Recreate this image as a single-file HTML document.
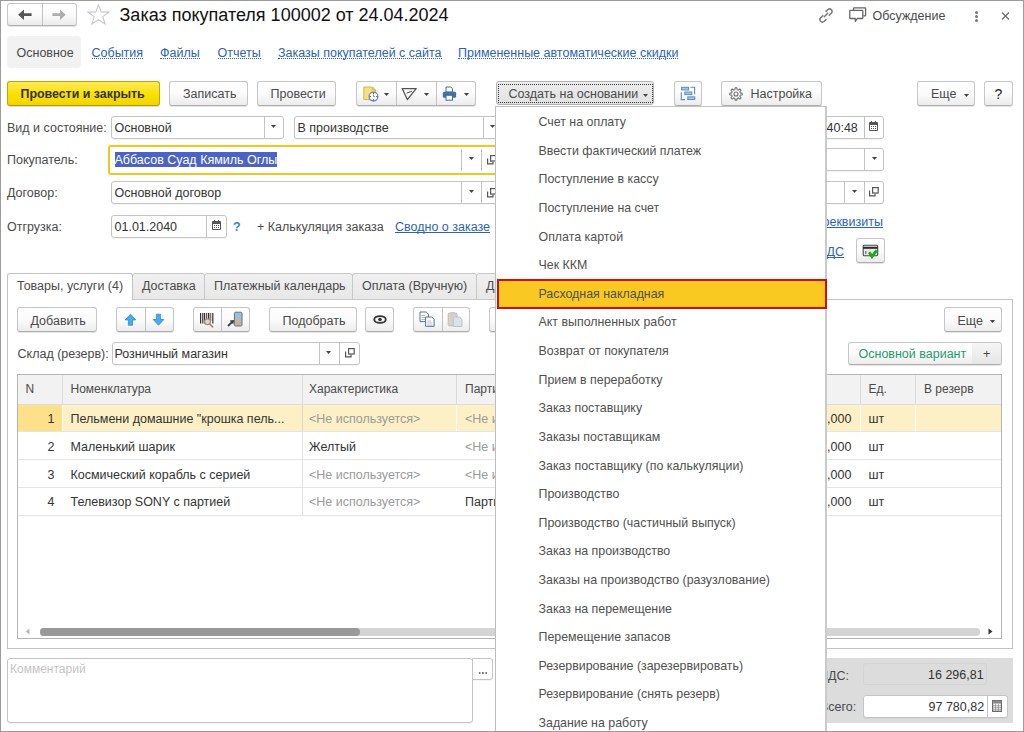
<!DOCTYPE html>
<html><head><meta charset="utf-8">
<style>
*{box-sizing:border-box;margin:0;padding:0}
html,body{width:1024px;height:732px;overflow:hidden;background:#fff}
body{position:relative;font-family:"Liberation Sans",sans-serif;font-size:12.5px;color:#4a4a4a}
.a{position:absolute}
.t{position:absolute;white-space:nowrap;line-height:1}
.btn{position:absolute;border:1px solid #c6c6c6;border-bottom-color:#aeaeae;border-radius:3px;background:linear-gradient(#ffffff 0%,#fbfbfb 50%,#ececec 100%);box-shadow:0 1px 0 rgba(0,0,0,.10)}
.fld{position:absolute;border:1px solid #c4c4c4;border-radius:3px;background:#fff;box-shadow:0 1px 0 rgba(0,0,0,.04)}
.sep{position:absolute;top:0;bottom:0;width:1px;background:#c2c2c2}
.dot{display:inline-block;height:12px;border-bottom:1px dotted #2c62b8}
.und{display:inline-block;height:12px;border-bottom:1px solid #2c62b8}
</style></head><body>
<div class="a" style="left:0px;top:0px;width:1024px;height:732px;border:1px solid #9c9c9c"></div>
<div class="btn" style="left:7px;top:3px;width:70px;height:23px;"><div class="sep" style="left:34px"></div></div>
<svg class="a" style="left:17px;top:9px" width="16" height="12" viewBox="0 0 16 12"><path d="M1.1 5.7 L7 0.4 V4.3 H14.6 V7.1 H7 V11 Z" fill="#555"/></svg>
<svg class="a" style="left:52px;top:9px" width="15" height="12" viewBox="0 0 15 12"><path d="M13.7 5.7 L8 0.4 V4.3 H0.4 V7.1 H8 V11 Z" fill="#adadad"/></svg>
<svg class="a" style="left:87px;top:4px" width="23" height="21" viewBox="0 0 23 21"><path d="M11.5 1 L14.2 7.9 L21.8 8.1 L15.8 12.6 L18.1 20 L11.5 15.7 L4.9 20 L7.2 12.6 L1.2 8.1 L8.8 7.9 Z" fill="none" stroke="#c2c7cc" stroke-width="1.1"/></svg>
<div class="t" style="left:119.5px;top:6.00px;font-size:18px;color:#111">Заказ покупателя 100002 от 24.04.2024</div>
<svg class="a" style="left:818px;top:8px" width="16" height="15" viewBox="0 0 16 15"><g fill="none" stroke="#777" stroke-width="1.5" stroke-linecap="round"><path d="M6.3 8.7 L9.7 5.3"/><path d="M8 3.4 L10 1.5 Q11.7 0.2 13.4 1.7 Q14.8 3.4 13.5 5.1 L11.2 7.3"/><path d="M8 11.6 L6 13.5 Q4.3 14.8 2.6 13.3 Q1.2 11.6 2.5 9.9 L4.8 7.7"/></g></svg>
<svg class="a" style="left:849px;top:7px" width="18" height="16" viewBox="0 0 18 16"><g fill="none" stroke="#666" stroke-width="1.3" stroke-linejoin="round"><path d="M4.5 3.2 V1.5 Q4.5 0.9 5.1 0.9 H16 Q16.6 0.9 16.6 1.5 V8.3 Q16.6 8.9 16 8.9 H14.3"/><path d="M1.4 3.4 H13.1 Q13.8 3.4 13.8 4 V10.9 Q13.8 11.5 13.1 11.5 H8.2 L6.4 14.4 L6.2 11.5 H1.4 Q0.8 11.5 0.8 10.9 V4 Q0.8 3.4 1.4 3.4 Z" fill="#fff"/></g></svg>
<div class="t" style="left:872.5px;top:10.00px">Обсуждение</div>
<div class="a" style="left:975px;top:11px;width:3.4px;height:3.4px;border-radius:50%;background:#777"></div>
<div class="a" style="left:975px;top:14.9px;width:3.4px;height:3.4px;border-radius:50%;background:#777"></div>
<div class="a" style="left:975px;top:18.8px;width:3.4px;height:3.4px;border-radius:50%;background:#777"></div>
<svg class="a" style="left:1001px;top:12px" width="9" height="8" viewBox="0 0 9 8"><path d="M1 0.5 L8 7.5 M8 0.5 L1 7.5" stroke="#666" stroke-width="1.1"/></svg>
<div class="a" style="left:7px;top:36px;width:74px;height:32px;background:#f2f2f2;border-radius:4px"></div>
<div class="t" style="left:16.5px;top:47.00px">Основное</div>
<div class="t" style="left:91.5px;top:47.00px;color:#2c62b8"><span class="dot">События</span></div>
<div class="t" style="left:160px;top:47.00px;color:#2c62b8"><span class="dot">Файлы</span></div>
<div class="t" style="left:217.5px;top:47.00px;color:#2c62b8"><span class="dot">Отчеты</span></div>
<div class="t" style="left:278px;top:47.00px;color:#2c62b8"><span class="dot">Заказы покупателей с сайта</span></div>
<div class="t" style="left:458px;top:47.00px;color:#2c62b8"><span class="dot">Примененные автоматические скидки</span></div>
<div class="a" style="left:7px;top:81px;width:153px;height:25px;border:1px solid #c7a500;border-bottom-color:#b89800;border-radius:3px;background:linear-gradient(#fdea5a,#fae000 55%,#f2d400);box-shadow:0 1px 0 rgba(0,0,0,.12)"></div>
<div class="t" style="left:20.5px;top:88.00px;color:#333;font-weight:bold;font-size:12.4px">Провести и закрыть</div>
<div class="btn" style="left:169px;top:81px;width:79px;height:25px;"></div>
<div class="t" style="left:183px;top:88.00px">Записать</div>
<div class="btn" style="left:257px;top:81px;width:79px;height:25px;"></div>
<div class="t" style="left:270.5px;top:88.00px">Провести</div>
<div class="btn" style="left:356px;top:81px;width:120px;height:25px;"><div class="sep" style="left:39px"></div><div class="sep" style="left:79px"></div></div>
<svg class="a" style="left:363px;top:86px" width="16" height="16" viewBox="0 0 16 16">
<path d="M0.8 1 H9.5 L12.5 4 V13.5 H0.8 Z" fill="#f6df82" stroke="#d8b84c" stroke-width="1"/>
<path d="M9.5 1 V4 H12.5" fill="none" stroke="#d8b84c" stroke-width="1"/>
<circle cx="10.5" cy="10.6" r="4.4" fill="#fff" stroke="#5a8cc6" stroke-width="1.3"/>
<rect x="10" y="6.6" width="1.1" height="1.4" fill="#e03030"/><rect x="10" y="13.2" width="1.1" height="1.4" fill="#e03030"/>
<rect x="6.6" y="10" width="1.4" height="1.1" fill="#e03030"/><rect x="13.1" y="10" width="1.4" height="1.1" fill="#e03030"/>
<path d="M10.5 8.5 V10.6 H12" fill="none" stroke="#5a8cc6" stroke-width="0.9"/>
</svg>
<svg class="a" style="left:384.00px;top:93.30px" width="5" height="3" viewBox="0 0 5 3"><path d="M0 0 H5 L2.5 3 Z" fill="#444"/></svg>
<svg class="a" style="left:401px;top:87px" width="17" height="14" viewBox="0 0 17 14"><path d="M1.2 1.6 H15.2 L6.3 12.6 Z" fill="none" stroke="#555" stroke-width="1.3" stroke-linejoin="round"/><path d="M5.6 6.2 L11 4.2" stroke="#555" stroke-width="1"/></svg>
<svg class="a" style="left:424.20px;top:93.30px" width="5" height="3" viewBox="0 0 5 3"><path d="M0 0 H5 L2.5 3 Z" fill="#444"/></svg>
<svg class="a" style="left:442px;top:86px" width="15" height="15" viewBox="0 0 15 15">
<path d="M4 1 H8.8 L10.5 2.7 V6 H4 Z" fill="#fff" stroke="#3f6fa6" stroke-width="1"/>
<rect x="0.8" y="5.8" width="13.3" height="6" rx="1.5" fill="#3f6fa6"/>
<rect x="4" y="9.3" width="6.5" height="4.9" fill="#fff" stroke="#3f6fa6" stroke-width="1"/>
</svg>
<svg class="a" style="left:464.40px;top:93.30px" width="5" height="3" viewBox="0 0 5 3"><path d="M0 0 H5 L2.5 3 Z" fill="#444"/></svg>
<div class="a" style="left:496px;top:81px;width:158px;height:24px;border:1px solid #b4b4b4;border-radius:3px;background:linear-gradient(#ececec,#e2e2e2)"></div>
<div class="a" style="left:498px;top:84px;width:155px;height:19px;border:1px dotted #333"></div>
<div class="t" style="left:508.5px;top:88.00px">Создать на основании</div>
<svg class="a" style="left:642.80px;top:93.50px" width="5" height="3" viewBox="0 0 5 3"><path d="M0 0 H5 L2.5 3 Z" fill="#444"/></svg>
<div class="btn" style="left:674px;top:81px;width:28px;height:25px;"></div>
<svg class="a" style="left:680px;top:86px" width="16" height="15" viewBox="0 0 16 15">
<g stroke="#5b8dbf" stroke-width="1" fill="#a9c8e6">
<rect x="1.5" y="1.3" width="7" height="2.6"/><rect x="4.8" y="6" width="7" height="2.6"/><rect x="7.8" y="10.9" width="7" height="2.6"/>
</g>
<path d="M10.5 1.3 H14.6 V8.3 M1.3 6.2 V13.6 H5" fill="none" stroke="#5b8dbf" stroke-width="1.1"/>
</svg>
<div class="btn" style="left:721px;top:81px;width:101px;height:25px;"></div>
<svg class="a" style="left:728px;top:85.5px" width="16" height="16" viewBox="0 0 16 16">
<path d="M14.30 8.00 L14.29 8.41 L14.15 8.81 L13.25 9.04 L12.34 9.16 L12.17 9.41 L12.07 9.68 L11.95 9.95 L11.89 10.25 L12.45 10.97 L12.92 11.78 L12.74 12.15 L12.45 12.45 L12.15 12.74 L11.78 12.92 L10.97 12.45 L10.25 11.89 L9.95 11.95 L9.68 12.07 L9.41 12.17 L9.16 12.34 L9.04 13.25 L8.81 14.15 L8.41 14.29 L8.00 14.30 L7.59 14.29 L7.19 14.15 L6.96 13.25 L6.84 12.34 L6.59 12.17 L6.32 12.07 L6.05 11.95 L5.75 11.89 L5.03 12.45 L4.22 12.92 L3.85 12.74 L3.55 12.45 L3.26 12.15 L3.08 11.78 L3.55 10.97 L4.11 10.25 L4.05 9.95 L3.93 9.68 L3.83 9.41 L3.66 9.16 L2.75 9.04 L1.85 8.81 L1.71 8.41 L1.70 8.00 L1.71 7.59 L1.85 7.19 L2.75 6.96 L3.66 6.84 L3.83 6.59 L3.93 6.32 L4.05 6.05 L4.11 5.75 L3.55 5.03 L3.08 4.22 L3.26 3.85 L3.55 3.55 L3.85 3.26 L4.22 3.08 L5.03 3.55 L5.75 4.11 L6.05 4.05 L6.32 3.93 L6.59 3.83 L6.84 3.66 L6.96 2.75 L7.19 1.85 L7.59 1.71 L8.00 1.70 L8.41 1.71 L8.81 1.85 L9.04 2.75 L9.16 3.66 L9.41 3.83 L9.68 3.93 L9.95 4.05 L10.25 4.11 L10.97 3.55 L11.78 3.08 L12.15 3.26 L12.45 3.55 L12.74 3.85 L12.92 4.22 L12.45 5.03 L11.89 5.75 L11.95 6.05 L12.07 6.32 L12.17 6.59 L12.34 6.84 L13.25 6.96 L14.15 7.19 L14.29 7.59 Z" fill="none" stroke="#707070" stroke-width="1.1" stroke-linejoin="round"/>
<circle cx="8" cy="8" r="2" fill="none" stroke="#707070" stroke-width="1.1"/>
</svg>
<div class="t" style="left:750.5px;top:88.00px">Настройка</div>
<div class="btn" style="left:917px;top:81px;width:58px;height:25px;"></div>
<div class="t" style="left:931px;top:88.00px">Еще</div>
<svg class="a" style="left:963.50px;top:93.50px" width="5" height="3" viewBox="0 0 5 3"><path d="M0 0 H5 L2.5 3 Z" fill="#444"/></svg>
<div class="btn" style="left:984px;top:81px;width:29px;height:25px;"></div>
<div class="t" style="left:994.5px;top:87.00px;font-size:14px;color:#222">?</div>
<div class="t" style="left:7px;top:122.00px">Вид и состояние:</div>
<div class="fld" style="left:111px;top:116px;width:173px;height:23px;"><div class="sep" style="left:152px"></div></div>
<svg class="a" style="left:271.00px;top:125.20px" width="5" height="3" viewBox="0 0 5 3"><path d="M0 0 H5 L2.5 3 Z" fill="#444"/></svg>
<div class="t" style="left:114.5px;top:122.00px;color:#333">Основной</div>
<div class="fld" style="left:294px;top:116px;width:215px;height:23px;"><div class="sep" style="left:188px"></div></div>
<svg class="a" style="left:489.50px;top:125.20px" width="5" height="3" viewBox="0 0 5 3"><path d="M0 0 H5 L2.5 3 Z" fill="#444"/></svg>
<div class="t" style="left:297.5px;top:122.00px;color:#333">В производстве</div>
<div class="t" style="left:7px;top:154.00px">Покупатель:</div>
<div class="a" style="left:108px;top:145px;width:400px;height:29.5px;border:2px solid #f6c51e;border-radius:3px;background:#fff"></div>
<div class="a" style="left:461px;top:149px;width:1px;height:22px;background:#c2c2c2"></div>
<div class="a" style="left:481px;top:149px;width:1px;height:22px;background:#c2c2c2"></div>
<svg class="a" style="left:469.00px;top:157.20px" width="5" height="3" viewBox="0 0 5 3"><path d="M0 0 H5 L2.5 3 Z" fill="#444"/></svg>
<svg class="a" style="left:487px;top:154.5px" width="10" height="10" viewBox="0 0 10 10"><rect x="3.6" y="0.6" width="5.6" height="5.4" fill="none" stroke="#555" stroke-width="1.2"/><path d="M0.6 3.4 V8.8 H6 V6.6" fill="none" stroke="#555" stroke-width="1.2"/></svg>
<div class="a" style="left:114.5px;top:152px;width:162.5px;height:14.7px;background:#4b64c4"></div>
<div class="t" style="left:114.5px;top:154.00px;color:#fff">Аббасов Суад Кямиль Оглы</div>
<div class="t" style="left:7px;top:187.00px">Договор:</div>
<div class="fld" style="left:111px;top:181px;width:400px;height:23px;"><div class="sep" style="left:349px"></div><div class="sep" style="left:369px"></div></div>
<svg class="a" style="left:468.50px;top:190.20px" width="5" height="3" viewBox="0 0 5 3"><path d="M0 0 H5 L2.5 3 Z" fill="#444"/></svg>
<svg class="a" style="left:487px;top:187.5px" width="10" height="10" viewBox="0 0 10 10"><rect x="3.6" y="0.6" width="5.6" height="5.4" fill="none" stroke="#555" stroke-width="1.2"/><path d="M0.6 3.4 V8.8 H6 V6.6" fill="none" stroke="#555" stroke-width="1.2"/></svg>
<div class="t" style="left:114.5px;top:187.00px;color:#333">Основной договор</div>
<div class="t" style="left:7px;top:221.00px">Отгрузка:</div>
<div class="fld" style="left:111px;top:215px;width:116px;height:23px;"><div class="sep" style="left:94px"></div></div>
<svg class="a" style="left:212px;top:220px" width="9" height="10" viewBox="0 0 9 10"><rect x="0" y="1" width="9" height="9" rx="1" fill="#555"/><rect x="1" y="4" width="7" height="5" fill="#fff"/><rect x="2" y="0" width="1" height="2" fill="#555"/><rect x="6" y="0" width="1" height="2" fill="#555"/><path d="M2 5.5 H3 M4 5.5 H5 M6 5.5 H7 M2 7.5 H3 M4 7.5 H5 M6 7.5 H7" stroke="#555" stroke-width="1"/></svg>
<div class="t" style="left:114.5px;top:221.00px;color:#333">01.01.2040</div>
<div class="t" style="left:233px;top:221.00px;color:#2f86c8;font-weight:bold">?</div>
<div class="t" style="left:257px;top:221.00px">+ Калькуляция заказа</div>
<div class="t" style="left:395px;top:221.00px;color:#2c62b8"><span class="und">Сводно о заказе</span></div>
<div class="fld" style="left:760px;top:116px;width:124px;height:23px;"><div class="sep" style="left:103px"></div></div>
<svg class="a" style="left:869px;top:121px" width="9" height="10" viewBox="0 0 9 10"><rect x="0" y="1" width="9" height="9" rx="1" fill="#555"/><rect x="1" y="4" width="7" height="5" fill="#fff"/><rect x="2" y="0" width="1" height="2" fill="#555"/><rect x="6" y="0" width="1" height="2" fill="#555"/><path d="M2 5.5 H3 M4 5.5 H5 M6 5.5 H7 M2 7.5 H3 M4 7.5 H5 M6 7.5 H7" stroke="#555" stroke-width="1"/></svg>
<div class="t" style="left:826.5px;top:122.00px;color:#333">40:48</div>
<div class="fld" style="left:760px;top:148px;width:124px;height:23px;"><div class="sep" style="left:103px"></div></div>
<svg class="a" style="left:871.50px;top:157.20px" width="5" height="3" viewBox="0 0 5 3"><path d="M0 0 H5 L2.5 3 Z" fill="#444"/></svg>
<div class="fld" style="left:760px;top:181px;width:124px;height:23px;"><div class="sep" style="left:83px"></div><div class="sep" style="left:103px"></div></div>
<svg class="a" style="left:851.50px;top:190.20px" width="5" height="3" viewBox="0 0 5 3"><path d="M0 0 H5 L2.5 3 Z" fill="#444"/></svg>
<svg class="a" style="left:869px;top:187px" width="10" height="10" viewBox="0 0 10 10"><rect x="3.6" y="0.6" width="5.6" height="5.4" fill="none" stroke="#555" stroke-width="1.2"/><path d="M0.6 3.4 V8.8 H6 V6.6" fill="none" stroke="#555" stroke-width="1.2"/></svg>
<div class="t" style="left:822.5px;top:216.00px;color:#2c62b8"><span class="und">реквизиты</span></div>
<div class="t" style="left:826.5px;top:246.00px;color:#2c62b8"><span class="und">ДС</span></div>
<div class="btn" style="left:856px;top:238px;width:29px;height:25px;"></div>
<svg class="a" style="left:862px;top:244px" width="17" height="15" viewBox="0 0 17 15">
<rect x="1.2" y="1.2" width="14.5" height="10.5" rx="1.2" fill="#e8e8e8" stroke="#4a4a4a" stroke-width="1.1"/>
<rect x="1.2" y="2.8" width="14.5" height="2" fill="#2a2a2a"/>
<rect x="3" y="7" width="1.5" height="3" fill="#888"/>
<path d="M7.2 8.3 L10 12.6 L14.8 6.3" fill="none" stroke="#12b012" stroke-width="2.8" stroke-linejoin="miter"/>
</svg>
<div class="a" style="left:7px;top:299px;width:1006px;height:350px;border:1px solid #c2c2c2"></div>
<div class="a" style="left:132px;top:273px;width:73px;height:27px;background:linear-gradient(#f0f0f0,#e8e8e8);border:1px solid #c8c8c8;border-radius:3px 3px 0 0"></div>
<div class="a" style="left:204px;top:273px;width:149px;height:27px;background:linear-gradient(#f0f0f0,#e8e8e8);border:1px solid #c8c8c8;border-radius:3px 3px 0 0"></div>
<div class="a" style="left:352px;top:273px;width:125px;height:27px;background:linear-gradient(#f0f0f0,#e8e8e8);border:1px solid #c8c8c8;border-radius:3px 3px 0 0"></div>
<div class="a" style="left:476px;top:273px;width:40px;height:27px;background:linear-gradient(#f0f0f0,#e8e8e8);border:1px solid #c8c8c8;border-radius:3px 3px 0 0"></div>
<div class="a" style="left:7px;top:273px;width:126px;height:27px;background:#fff;border:1px solid #c2c2c2;border-bottom:none;border-radius:3px 3px 0 0"></div>
<div class="t" style="left:17px;top:280.00px">Товары, услуги (4)</div>
<div class="t" style="left:142px;top:280.00px">Доставка</div>
<div class="t" style="left:214px;top:280.00px">Платежный календарь</div>
<div class="t" style="left:362px;top:280.00px">Оплата (Вручную)</div>
<div class="t" style="left:486px;top:280.00px">Д</div>
<div class="btn" style="left:17px;top:307px;width:80px;height:25px;"></div>
<div class="t" style="left:30.5px;top:315.00px">Добавить</div>
<div class="btn" style="left:116px;top:307px;width:58px;height:25px;"><div class="sep" style="left:28px"></div></div>
<svg class="a" style="left:124px;top:313px" width="13" height="13" viewBox="0 0 13 13"><path d="M6.5 1.2 L11.8 6.9 H8.6 V12.2 H4.4 V6.9 H1.2 Z" fill="#45aeea" stroke="#2a8ccf" stroke-width="0.8" stroke-linejoin="round"/></svg>
<svg class="a" style="left:152px;top:313px" width="13" height="13" viewBox="0 0 13 13"><path d="M6.5 12.2 L11.8 6.5 H8.6 V1.2 H4.4 V6.5 H1.2 Z" fill="#45aeea" stroke="#2a8ccf" stroke-width="0.8" stroke-linejoin="round"/></svg>
<div class="btn" style="left:193px;top:307px;width:57px;height:25px;"><div class="sep" style="left:27px"></div></div>
<svg class="a" style="left:199px;top:312px" width="16" height="16" viewBox="0 0 16 16">
<g fill="#333"><rect x="1" y="1" width="1.2" height="10.5"/><rect x="3" y="1" width="0.8" height="10.5"/><rect x="4.6" y="1" width="1.6" height="10.5"/><rect x="7.2" y="1" width="0.8" height="7"/><rect x="8.8" y="1" width="1.6" height="7"/><rect x="11.4" y="1" width="0.8" height="8"/><rect x="13.2" y="1" width="1.2" height="10.5"/></g>
<circle cx="8.5" cy="9.8" r="2.9" fill="#c9dcf3" stroke="#b98a5e" stroke-width="1.2"/>
<path d="M10.6 11.9 L13.5 14.8" stroke="#b98a5e" stroke-width="1.8" stroke-linecap="round"/>
</svg>
<svg class="a" style="left:227px;top:311px" width="16" height="16" viewBox="0 0 16 16">
<rect x="7.4" y="1.2" width="7.6" height="13.8" rx="1.2" fill="#b5b5b5" stroke="#707070" stroke-width="1"/>
<rect x="8.6" y="2.4" width="5.2" height="5" fill="#8fc3ee"/>
<rect x="9.4" y="8.4" width="3.6" height="1.4" fill="#e8c020"/>
<path d="M1 15 L5.2 10.8" stroke="#3a3a3a" stroke-width="1.8"/><path d="M7 9 L2.6 9.6 L6.4 13.4 Z" fill="#3a3a3a"/>
</svg>
<div class="btn" style="left:269px;top:307px;width:88px;height:25px;"></div>
<div class="t" style="left:282.5px;top:315.00px">Подобрать</div>
<div class="btn" style="left:365px;top:307px;width:29px;height:25px;"></div>
<svg class="a" style="left:373px;top:315px" width="14" height="9" viewBox="0 0 14 9"><ellipse cx="7" cy="4.5" rx="5.8" ry="3.4" fill="none" stroke="#333" stroke-width="1.8"/><circle cx="7" cy="4.5" r="1.8" fill="#333"/></svg>
<div class="btn" style="left:413px;top:307px;width:57px;height:25px;"><div class="sep" style="left:28px"></div></div>
<svg class="a" style="left:419px;top:311px" width="17" height="17" viewBox="0 0 17 17">
<path d="M1 1 H7.2 L9.5 3.3 V10.6 H1 Z" fill="#fff" stroke="#58708e" stroke-width="1"/>
<path d="M2.5 4.5 H6 M2.5 6.5 H7.5 M2.5 8.5 H7.5" stroke="#a0b0c4" stroke-width="0.8"/>
<path d="M6.6 6 H12.8 L15.1 8.3 V15.3 H6.6 Z" fill="#fff" stroke="#58708e" stroke-width="1"/>
<path d="M8.2 10 H12 M8.2 12 H13.5 M8.2 14 H13.5" stroke="#a0b0c4" stroke-width="0.8"/>
</svg>
<svg class="a" style="left:447px;top:311px" width="17" height="17" viewBox="0 0 17 17">
<rect x="1.2" y="2.2" width="8.8" height="12.6" rx="1" fill="#d8d2cc" stroke="#c4b8ae" stroke-width="1"/>
<rect x="3.6" y="1" width="4" height="2.4" fill="#c8c8c8"/>
<path d="M6.2 6 H12.6 L15 8.4 V15.4 H6.2 Z" fill="#dde2e8" stroke="#b8c0ca" stroke-width="1"/>
</svg>
<div class="btn" style="left:489px;top:307px;width:40px;height:25px;"></div>
<div class="btn" style="left:944px;top:307px;width:58px;height:25px;"></div>
<div class="t" style="left:957.5px;top:315.00px">Еще</div>
<svg class="a" style="left:990.00px;top:319.50px" width="5" height="3" viewBox="0 0 5 3"><path d="M0 0 H5 L2.5 3 Z" fill="#444"/></svg>
<div class="t" style="left:17.5px;top:348.00px">Склад (резерв):</div>
<div class="fld" style="left:112px;top:342px;width:248px;height:23px;"><div class="sep" style="left:206px"></div><div class="sep" style="left:226px"></div></div>
<svg class="a" style="left:326.10px;top:351.20px" width="5" height="3" viewBox="0 0 5 3"><path d="M0 0 H5 L2.5 3 Z" fill="#444"/></svg>
<svg class="a" style="left:345px;top:348px" width="10" height="10" viewBox="0 0 10 10"><rect x="3.6" y="0.6" width="5.6" height="5.4" fill="none" stroke="#555" stroke-width="1.2"/><path d="M0.6 3.4 V8.8 H6 V6.6" fill="none" stroke="#555" stroke-width="1.2"/></svg>
<div class="t" style="left:114.5px;top:348.00px;color:#333">Розничный магазин</div>
<div class="btn" style="left:848px;top:342px;width:154px;height:23px;"><div class="sep" style="left:123px"></div></div>
<div class="a" style="left:972px;top:343px;width:29px;height:21px;background:linear-gradient(#f6f6f6,#e6e6e6);border-radius:0 2px 2px 0"></div>
<div class="t" style="left:858.5px;top:348.00px;color:#1f9b6e">Основной вариант</div>
<div class="t" style="left:983px;top:348.00px;color:#444">+</div>
<div class="a" style="left:17px;top:374px;width:985px;height:265px;border:1px solid #b4b4b4;background:#fff"></div>
<div class="a" style="left:18px;top:375px;width:983px;height:30px;background:#f2f2f2;border-bottom:1px solid #dcdcdc"></div>
<div class="a" style="left:18px;top:405px;width:983px;height:26px;background:#fdf0c6"></div>
<div class="a" style="left:18px;top:405px;width:44px;height:26px;background:#fde18a"></div>
<div class="a" style="left:18px;top:431px;width:983px;height:1px;background:#e4e4e4"></div>
<div class="a" style="left:18px;top:459px;width:983px;height:1px;background:#e4e4e4"></div>
<div class="a" style="left:18px;top:487px;width:983px;height:1px;background:#e4e4e4"></div>
<div class="a" style="left:18px;top:515px;width:983px;height:1px;background:#e4e4e4"></div>
<div class="a" style="left:62px;top:375px;width:1px;height:29px;background:#dadada"></div>
<div class="a" style="left:62px;top:405px;width:1px;height:26px;background:#fff"></div>
<div class="a" style="left:302px;top:375px;width:1px;height:29px;background:#dadada"></div>
<div class="a" style="left:302px;top:405px;width:1px;height:26px;background:#ded8c0"></div>
<div class="a" style="left:456px;top:375px;width:1px;height:29px;background:#dadada"></div>
<div class="a" style="left:456px;top:405px;width:1px;height:26px;background:#fff"></div>
<div class="a" style="left:860px;top:375px;width:1px;height:29px;background:#dadada"></div>
<div class="a" style="left:860px;top:405px;width:1px;height:26px;background:#fff"></div>
<div class="a" style="left:915px;top:375px;width:1px;height:29px;background:#dadada"></div>
<div class="a" style="left:915px;top:405px;width:1px;height:26px;background:#fff"></div>
<div class="a" style="left:302px;top:432px;width:1px;height:83px;background:#e0e0e0"></div>
<div class="t" style="left:25.5px;top:383.00px;font-size:12px">N</div>
<div class="t" style="left:70.5px;top:383.00px;font-size:12px">Номенклатура</div>
<div class="t" style="left:309px;top:383.00px;font-size:12px">Характеристика</div>
<div class="t" style="left:465px;top:383.00px;font-size:12px">Партия</div>
<div class="t" style="left:868.5px;top:383.00px;font-size:12px">Ед.</div>
<div class="t" style="left:924px;top:383.00px;font-size:12px">В резерв</div>
<div class="t" style="left:47.5px;top:413.00px;color:#333">1</div>
<div class="t" style="left:70.5px;top:413.00px;color:#333">Пельмени домашние "крошка пель...</div>
<div class="t" style="left:309px;top:413.00px;color:#9a9a9a">&lt;Не используется&gt;</div>
<div class="t" style="left:465px;top:413.00px;color:#9a9a9a">&lt;Не используется&gt;</div>
<div class="t" style="left:827px;top:413.00px;color:#333">,000</div>
<div class="t" style="left:868.5px;top:413.00px;color:#333">шт</div>
<div class="t" style="left:47.5px;top:441.00px;color:#333">2</div>
<div class="t" style="left:70.5px;top:441.00px;color:#333">Маленький шарик</div>
<div class="t" style="left:309px;top:441.00px;color:#333">Желтый</div>
<div class="t" style="left:465px;top:441.00px;color:#9a9a9a">&lt;Не используется&gt;</div>
<div class="t" style="left:827px;top:441.00px;color:#333">,000</div>
<div class="t" style="left:868.5px;top:441.00px;color:#333">шт</div>
<div class="t" style="left:47.5px;top:469.00px;color:#333">3</div>
<div class="t" style="left:70.5px;top:469.00px;color:#333">Космический корабль с серией</div>
<div class="t" style="left:309px;top:469.00px;color:#9a9a9a">&lt;Не используется&gt;</div>
<div class="t" style="left:465px;top:469.00px;color:#9a9a9a">&lt;Не используется&gt;</div>
<div class="t" style="left:827px;top:469.00px;color:#333">,000</div>
<div class="t" style="left:868.5px;top:469.00px;color:#333">шт</div>
<div class="t" style="left:47.5px;top:496.00px;color:#333">4</div>
<div class="t" style="left:70.5px;top:496.00px;color:#333">Телевизор SONY с партией</div>
<div class="t" style="left:309px;top:496.00px;color:#9a9a9a">&lt;Не используется&gt;</div>
<div class="t" style="left:465px;top:496.00px;color:#333">Партия</div>
<div class="t" style="left:827px;top:496.00px;color:#333">,000</div>
<div class="t" style="left:868.5px;top:496.00px;color:#333">шт</div>
<div class="a" style="left:40px;top:628px;width:940px;height:7.5px;background:#d4d4d4;border-radius:4px"></div>
<div class="a" style="left:40px;top:628px;width:320px;height:7.5px;background:#999;border-radius:4px"></div>
<svg class="a" style="left:25px;top:628px" width="5" height="7" viewBox="0 0 5 7"><path d="M4.5 0.5 V6.5 L0.5 3.5 Z" fill="#bbb"/></svg>
<svg class="a" style="left:988px;top:628px" width="5" height="7" viewBox="0 0 5 7"><path d="M0.5 0.5 V6.5 L4.5 3.5 Z" fill="#333"/></svg>
<div class="fld" style="left:7px;top:658px;width:466px;height:65px;"></div>
<div class="t" style="left:10px;top:663.00px;font-size:12px;color:#c6c3c3">Комментарий</div>
<div class="fld" style="left:472px;top:658px;width:21px;height:22px;border-radius:0 3px 3px 0"></div>
<div class="a" style="left:478px;top:672px;width:10px;height:2px;background:radial-gradient(circle,#555 0.6px,transparent 0.9px) 0 0/3.3px 2px repeat-x"></div>
<div class="a" style="left:500px;top:658px;width:513px;height:65px;background:#dcdcdc"></div>
<div class="t" style="left:819px;top:670.00px">НДС:</div>
<div class="a" style="left:863px;top:662.5px;width:124px;height:22.5px;background:#dcdcdc;border:1px solid #d3d3d3;border-radius:3px"></div>
<div class="t" style="left:928px;top:669.00px;color:#333">16 296,81</div>
<div class="t" style="left:820px;top:701.00px">Всего:</div>
<div class="fld" style="left:863px;top:695px;width:145px;height:23px;"><div class="sep" style="left:123px"></div></div>
<svg class="a" style="left:992px;top:700px" width="10" height="12" viewBox="0 0 10 12">
<rect x="0.6" y="0.6" width="8.8" height="10.8" fill="#fff" stroke="#6a6a6a" stroke-width="1.2"/>
<rect x="0.6" y="0.6" width="8.8" height="3" fill="#8a8a8a"/>
<path d="M1 5.8 H9 M1 7.8 H9 M1 9.8 H9 M3.6 4 V11 M6.4 4 V11" stroke="#8a8a8a" stroke-width="0.8"/>
</svg>
<div class="t" style="left:928.5px;top:701.00px;color:#333">97 780,82</div>
<div class="a" style="left:495px;top:106px;width:332px;height:626px;background:#fff;border-left:1px solid #bdbdbd;border-right:2px solid #cacaca;border-top:1px solid #c2c2c2"></div>
<div class="a" style="left:497px;top:279px;width:330px;height:30px;background:#f9c922;border:2px solid #d60c14"></div>
<div class="t" style="left:538.5px;top:116.00px;font-size:12.4px;color:#505050">Счет на оплату</div>
<div class="t" style="left:538.5px;top:145.00px;font-size:12.4px;color:#505050">Ввести фактический платеж</div>
<div class="t" style="left:538.5px;top:173.00px;font-size:12.4px;color:#505050">Поступление в кассу</div>
<div class="t" style="left:538.5px;top:202.00px;font-size:12.4px;color:#505050">Поступление на счет</div>
<div class="t" style="left:538.5px;top:231.00px;font-size:12.4px;color:#505050">Оплата картой</div>
<div class="t" style="left:538.5px;top:259.00px;font-size:12.4px;color:#505050">Чек ККМ</div>
<div class="t" style="left:538.5px;top:288.00px;font-size:12.4px;color:#505050">Расходная накладная</div>
<div class="t" style="left:538.5px;top:316.00px;font-size:12.4px;color:#505050">Акт выполненных работ</div>
<div class="t" style="left:538.5px;top:345.00px;font-size:12.4px;color:#505050">Возврат от покупателя</div>
<div class="t" style="left:538.5px;top:374.00px;font-size:12.4px;color:#505050">Прием в переработку</div>
<div class="t" style="left:538.5px;top:402.00px;font-size:12.4px;color:#505050">Заказ поставщику</div>
<div class="t" style="left:538.5px;top:431.00px;font-size:12.4px;color:#505050">Заказы поставщикам</div>
<div class="t" style="left:538.5px;top:460.00px;font-size:12.4px;color:#505050">Заказ поставщику (по калькуляции)</div>
<div class="t" style="left:538.5px;top:488.00px;font-size:12.4px;color:#505050">Производство</div>
<div class="t" style="left:538.5px;top:517.00px;font-size:12.4px;color:#505050">Производство (частичный выпуск)</div>
<div class="t" style="left:538.5px;top:545.00px;font-size:12.4px;color:#505050">Заказ на производство</div>
<div class="t" style="left:538.5px;top:574.00px;font-size:12.4px;color:#505050">Заказы на производство (разузлование)</div>
<div class="t" style="left:538.5px;top:603.00px;font-size:12.4px;color:#505050">Заказ на перемещение</div>
<div class="t" style="left:538.5px;top:631.00px;font-size:12.4px;color:#505050">Перемещение запасов</div>
<div class="t" style="left:538.5px;top:660.00px;font-size:12.4px;color:#505050">Резервирование (зарезервировать)</div>
<div class="t" style="left:538.5px;top:688.00px;font-size:12.4px;color:#505050">Резервирование (снять резерв)</div>
<div class="t" style="left:538.5px;top:717.00px;font-size:12.4px;color:#505050">Задание на работу</div>
<div class="a" style="left:0px;top:731px;width:1024px;height:1px;background:#9c9c9c"></div>
<div class="a" style="left:1023px;top:0px;width:1px;height:732px;background:#9c9c9c"></div>
</body></html>
